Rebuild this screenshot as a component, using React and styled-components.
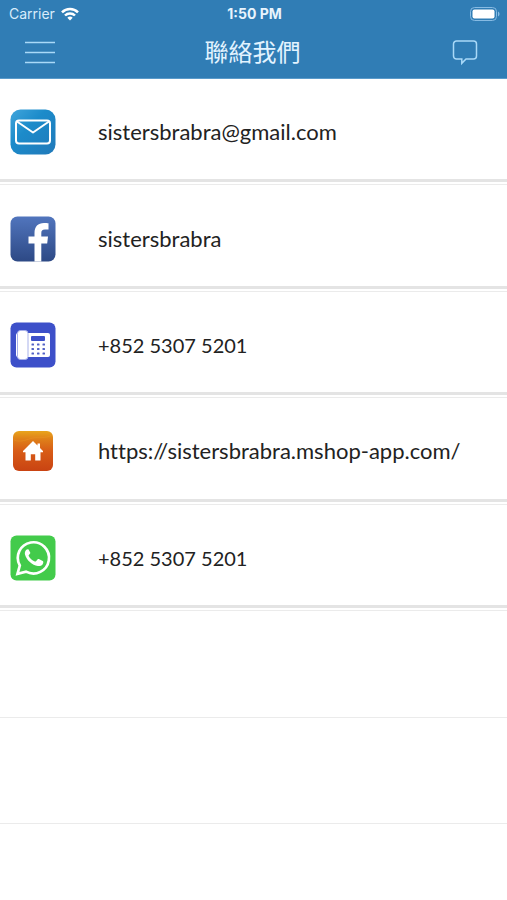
import React from 'react';
import styled, { createGlobalStyle } from 'styled-components';

const GlobalStyle = createGlobalStyle`
  * {
    box-sizing: border-box;
  }
  body {
    margin: 0;
    background-color: #fff;
    font-family: Lato, "Noto Sans CJK TC", sans-serif;
  }
`;

const Page = styled.div`
  min-height: 100vh;
  background-color: #fff;
`;

const Header = styled.header`
  background-color: #307db5;
  border-bottom: 1px solid #5a9bcb;
  color: #fff;
`;

const StatusBar = styled.div`
  display: grid;
  grid-template-columns: 1fr auto 1fr;
  align-items: center;
  height: 27px;
  padding: 0 7px 0 9px;
  font-family: Inter, "Liberation Sans", sans-serif;
  font-size: 14px;
`;

const Carrier = styled.span`
  display: flex;
  align-items: center;
  gap: 6px;
  color: #d8ecfb;
`;

const Time = styled.span`
  font-weight: 700;
  color: #e8f4fd;
`;

const Battery = styled.svg`
  justify-self: end;
`;

const NavBar = styled.nav`
  display: grid;
  grid-template-columns: 1fr auto 1fr;
  align-items: center;
  height: 51px;
  padding: 0 26px 0 24px;
`;

const IconButton = styled.button`
  display: flex;
  justify-self: ${props => props.$end ? 'end' : 'start'};
  padding: 0;
  border: none;
  background: none;
  color: #a9d9f8;
  cursor: pointer;
`;

const Title = styled.h1`
  margin: 0;
  padding-bottom: 4px;
  font-family: "Noto Sans CJK TC", sans-serif;
  font-size: 24px;
  font-weight: 400;
  line-height: 36px;
  color: #e2f3ff;
`;

const ContactList = styled.ul`
  display: grid;
  grid-template-rows: repeat(7, 1fr);
  min-height: 745px;
  margin: 0;
  padding: 0;
  list-style: none;
`;

const Row = styled.li`
  display: flex;
  padding-bottom: 2px;
  border-bottom: 1px solid #ebebeb;
`;

const ContactLink = styled.a`
  display: flex;
  flex: 1;
  align-items: center;
  gap: 42px;
  min-width: 0;
  padding: 6px 10px 0;
  border-bottom: 3px solid #e4e4e4;
  font-size: ${props => props.$numeric ? '20px' : '22px'};
  font-variant-ligatures: none;
  line-height: 28px;
  color: #222;
  text-decoration: none;
`;

const Badge = styled.svg`
  flex: none;
  width: 46px;
  height: 46px;
`;

function MailIcon() {
  return (
    <Badge viewBox="0 0 46 46" aria-hidden="true">
      <defs>
        <linearGradient id="mail" x1="0" y1="0" x2="1" y2="1">
          <stop offset="0" stopColor="#40a5dc" />
          <stop offset="0.4" stopColor="#1c8bca" />
          <stop offset="1" stopColor="#2179b9" />
        </linearGradient>
      </defs>
      <rect x="0.5" y="0.5" width="45" height="45" rx="10" fill="url(#mail)" />
      <g fill="none" stroke="#fff" strokeWidth="2" strokeLinejoin="round">
        <rect x="6" y="11.5" width="34" height="23" rx="3" />
        <path d="M7 12.5 23 23.5 39 12.5" />
      </g>
    </Badge>
  );
}

function FacebookIcon() {
  return (
    <Badge viewBox="0 0 46 46" aria-hidden="true">
      <defs>
        <linearGradient id="facebook" x1="0" y1="0" x2="0" y2="1">
          <stop offset="0" stopColor="#5175bd" />
          <stop offset="1" stopColor="#2d4985" />
        </linearGradient>
      </defs>
      <rect x="0.5" y="0.5" width="45" height="45" rx="7" fill="url(#facebook)" />
      <path
        fill="#fff"
        d="M24.5 45.5V27.5h-6v-7h6V17c0-6.5 3.5-10 9.5-10 1.800 0 3.500.1 4.500.3v6.200h-3.500c-2.900 0-3.700 1.300-3.700 3.500v3.500h6.700l-.8 7h-5.900v18z"
      />
    </Badge>
  );
}

function PhoneIcon() {
  return (
    <Badge viewBox="0 0 46 46" aria-hidden="true">
      <rect x="0.5" y="0.5" width="45" height="45" rx="6" fill="#3d50c9" />
      <rect x="6" y="11" width="34" height="24" rx="2" fill="#fff" />
      <rect x="7.5" y="8.5" width="10.5" height="29" rx="3" fill="#fff" stroke="#a9b2ea" />
      <rect x="21" y="14" width="14" height="5" rx="1" fill="#3d50c9" />
      <g fill="#5362c6">
        {[21.5, 27, 32.5].map((x) =>
          [21.5, 26, 30.5].map((y) => (
            <rect key={`${x}-${y}`} x={x} y={y} width="2.5" height="2" rx="0.5" />
          ))
        )}
      </g>
    </Badge>
  );
}

function HomeIcon() {
  return (
    <Badge viewBox="0 0 46 46" aria-hidden="true">
      <defs>
        <linearGradient id="home" x1="0" y1="0" x2="0" y2="1">
          <stop offset="0" stopColor="#e9a51c" />
          <stop offset="0.2" stopColor="#df8019" />
          <stop offset="0.5" stopColor="#d85c17" />
          <stop offset="1" stopColor="#c94312" />
        </linearGradient>
      </defs>
      <rect x="3" y="3" width="40" height="40" rx="6" fill="url(#home)" />
      <path d="M4 12c8 3 13-1 19-2s12 1 19-3" fill="none" stroke="#ee9a2c" opacity="0.3" />
      <path
        fill="#fff"
        d="M23 13 13 23v1.300h2.500V32.500h5.300v-6.200h4.400v6.200h5.300v-8.200H33V23l-3-3v-4.500h-2.500V17.500z"
      />
    </Badge>
  );
}

function WhatsappIcon() {
  return (
    <Badge viewBox="0 0 46 46" aria-hidden="true">
      <rect x="0.5" y="0.5" width="45" height="45" rx="6" fill="#43cb4b" />
      <path
        d="M7.5 38.8 9.8 30.5A15.6 15.6 0 1 1 16 36.6z"
        fill="none"
        stroke="#fff"
        strokeWidth="2.7"
      />
      <path
        fill="#fff"
        d="M17.800 14.300c-.8 0-1.300.3-1.700.8-1.200 1.300-1.500 2.900-1.100 4.500 1.400 5.500 7.300 10.900 12.800 11.500 2.400.2 4.900-.9 5.400-3.200.2-1 .1-1.500-.5-1.900l-3.800-1.900c-.6-.3-1-.2-1.400.3l-1.500 1.800c-.3.4-.7.5-1.200.3-2.800-1.200-4.800-3-6.100-5.400-.2-.4-.1-.7.2-1.100l1.200-1.400c.3-.4.3-.8.1-1.200l-1.500-2.600c-.2-.4-.5-.5-.9-.5z"
      />
    </Badge>
  );
}

const contacts = [
  { icon: MailIcon, text: 'sistersbrabra@gmail.com', href: 'mailto:sistersbrabra@gmail.com' },
  { icon: FacebookIcon, text: 'sistersbrabra', href: '#facebook-page' },
  { icon: PhoneIcon, text: '+852 5307 5201', href: 'tel:+85253075201', numeric: true },
  { icon: HomeIcon, text: 'https://sistersbrabra.mshop-app.com/', href: '#website' },
  { icon: WhatsappIcon, text: '+852 5307 5201', href: '#whatsapp-chat', numeric: true },
];

function App() {
  return (
    <Page>
      <GlobalStyle />
      <Header>
        <StatusBar>
          <Carrier>
            Carrier
            <svg width="18" height="14" viewBox="0 0 18 14" fill="none" stroke="#fff" strokeWidth="2.5">
              <path d="M1 5.3a11.3 11.3 0 0 1 16 0" />
              <path d="M4 8.5a7 7 0 0 1 10 0" />
              <path d="M6.3 10.8a3.8 3.8 0 0 1 5.4 0L9 13.5z" fill="#fff" stroke="none" />
            </svg>
          </Carrier>
          <Time>1:50 PM</Time>
          <Battery width="30" height="14" viewBox="0 0 30 14">
            <rect x="0.5" y="0.5" width="26" height="13" rx="4" fill="none" stroke="#87bbe3" />
            <rect x="2.5" y="2.5" width="22" height="9" rx="2" fill="#fff" />
            <path d="M28 4.5c2 .7 2 4.3 0 5z" fill="#87bbe3" />
          </Battery>
        </StatusBar>
        <NavBar>
          <IconButton type="button" aria-label="Menu">
            <svg width="32" height="24" viewBox="0 0 32 24" stroke="currentColor" strokeWidth="1.5">
              <path d="M1 1.500h30M1 11.500h30M1 21.500h30" />
            </svg>
          </IconButton>
          <Title>聯絡我們</Title>
          <IconButton type="button" aria-label="Messages" $end>
            <svg width="32" height="26" viewBox="0 0 32 26" fill="none" stroke="currentColor" strokeWidth="1.5">
              <path d="M7.500 1h17a3 3 0 0 1 3 3v12a3 3 0 0 1-3 3H17l-4.200 4.300v-4.300H7.500a3 3 0 0 1-3-3v-12a3 3 0 0 1 3-3z" />
            </svg>
          </IconButton>
        </NavBar>
      </Header>
      <ContactList>
        {contacts.map(({ icon: Icon, text, href, numeric }) => (
          <Row key={href}>
            <ContactLink href={href} $numeric={numeric}>
              <Icon />
              {text}
            </ContactLink>
          </Row>
        ))}
        <Row />
        <Row />
      </ContactList>
    </Page>
  );
}

export default App;
